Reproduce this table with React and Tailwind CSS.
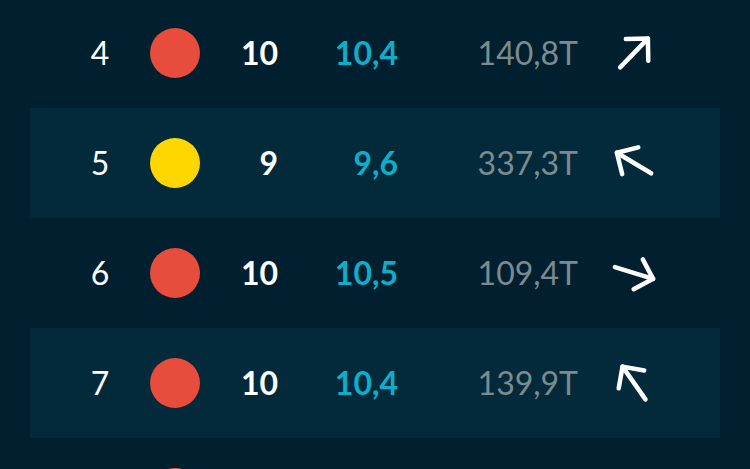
const rows = [
  { rank: 4, dot: 'bg-[#e74c3c]', score: '10', avg: '10,4', total: '140,8T', turn: 'rotate-[44deg]' },
  { rank: 5, dot: 'bg-[#ffd700]', score: '9', avg: '9,6', total: '337,3T', turn: 'rotate-[-59deg]' },
  { rank: 6, dot: 'bg-[#e74c3c]', score: '10', avg: '10,5', total: '109,4T', turn: 'rotate-[107deg]' },
  { rank: 7, dot: 'bg-[#e74c3c]', score: '10', avg: '10,4', total: '139,9T', turn: 'rotate-[-35deg]' },
  // next row only peeks in at the bottom edge
  { rank: 8, dot: 'bg-[#e74c3c]', partial: true },
];

function Arrow({ turn }) {
  return (
    <svg
      viewBox="0 0 48 48"
      className={`w-[48px] h-[48px] ${turn}`}
      fill="none"
      stroke="white"
      strokeWidth="4.5"
      strokeLinecap="round"
      strokeLinejoin="round"
    >
      <path d="M24 44 L24 4" />
      <path d="M8.4 19.6 L24 4 L39.6 19.6" />
    </svg>
  );
}

export default function App() {
  return (
    <div
      className="h-screen overflow-hidden bg-[#01202f] text-[32px] leading-none"
      style={{ fontFamily: 'Lato, "Liberation Sans", sans-serif' }}
    >
      <div className="-mt-[2px]">
        {rows.map((row, i) => (
          <div
            key={row.rank}
            className={`mx-[30px] h-[110px] flex items-center ${i % 2 === 1 ? 'bg-[#022a3a]' : ''}`}
          >
            <div className="ml-[50px] w-[40px] text-center text-white">{!row.partial && row.rank}</div>
            <div className={`ml-[30px] w-[50px] h-[50px] rounded-full ${row.dot}`} />
            {!row.partial && (
              <>
                <div className="w-[78px] text-right font-bold text-white">{row.score}</div>
                <div className="w-[120px] text-right font-bold text-[#0fadc9]">{row.avg}</div>
                <div className="w-[180px] text-right text-[#7d8b90]">{row.total}</div>
                <div className="ml-[32px]">
                  <Arrow turn={row.turn} />
                </div>
              </>
            )}
          </div>
        ))}
      </div>
    </div>
  );
}
